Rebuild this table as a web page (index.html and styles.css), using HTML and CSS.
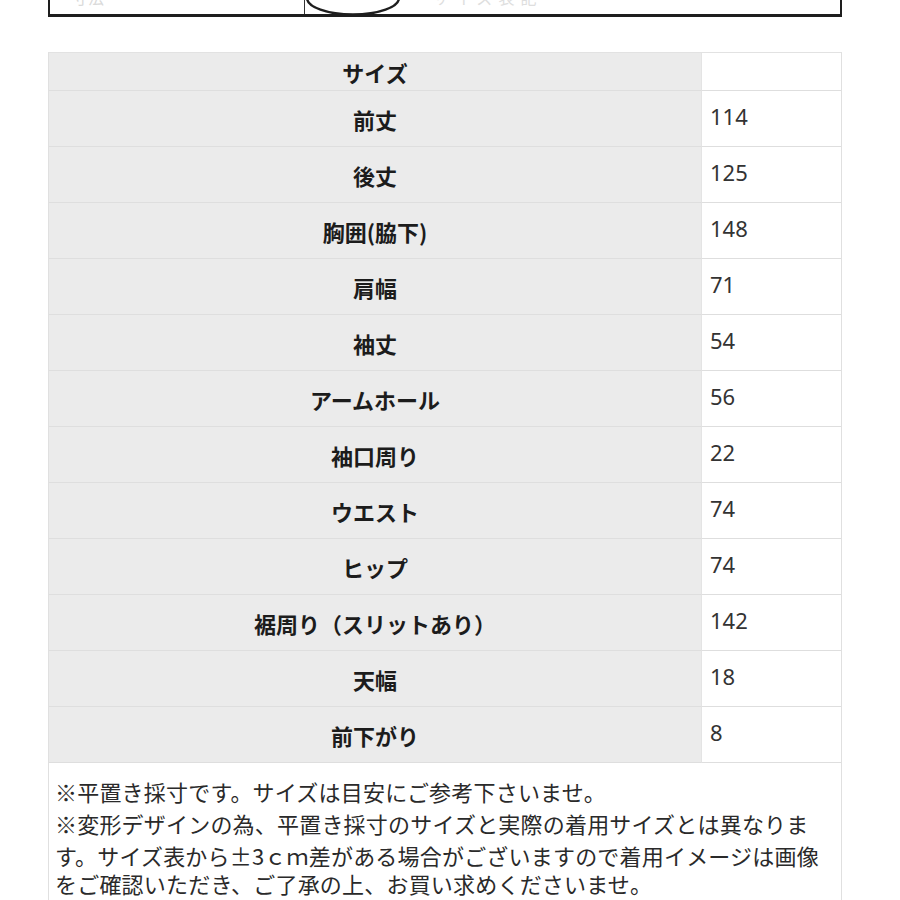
FILE: index.html
```html
<!DOCTYPE html>
<html lang="ja">
<head>
<meta charset="utf-8">
<title>サイズ表</title>
<link rel="stylesheet" href="styles.css">
</head>
<body>
<div class="page">
  <div class="topbox">
    <div class="top-left"><span class="faint">寸法</span></div>
    <div class="top-right">
      <svg class="ring" width="96" height="16" viewBox="0 0 96 16"><ellipse cx="48" cy="-2" rx="46" ry="16.5" fill="none" stroke="#1e1e1e" stroke-width="2.4"/></svg>
      <span class="faint faint-r">サイズ表記</span>
    </div>
  </div>

  <div class="sizes">
    <div class="lab first">サイズ</div><div class="val first"></div>
    <div class="lab">前丈</div><div class="val">114</div>
    <div class="lab">後丈</div><div class="val">125</div>
    <div class="lab">胸囲(脇下)</div><div class="val">148</div>
    <div class="lab">肩幅</div><div class="val">71</div>
    <div class="lab">袖丈</div><div class="val">54</div>
    <div class="lab">アームホール</div><div class="val">56</div>
    <div class="lab">袖口周り</div><div class="val">22</div>
    <div class="lab">ウエスト</div><div class="val">74</div>
    <div class="lab">ヒップ</div><div class="val">74</div>
    <div class="lab">裾周り（スリットあり）</div><div class="val">142</div>
    <div class="lab">天幅</div><div class="val">18</div>
    <div class="lab">前下がり</div><div class="val">8</div>
  </div>

  <div class="notes">
    <div class="line">※平置き採寸です。サイズは目安にご参考下さいませ。</div>
    <div class="line">※変形デザインの為、平置き採寸のサイズと実際の着用サイズとは異なりま</div>
    <div class="line">す。サイズ表から±3ｃｍ差がある場合がございますので着用イメージは画像</div>
    <div class="line last">をご確認いただき、ご了承の上、お買い求めくださいませ。</div>
  </div>
</div>
</body>
</html>
```

FILE: styles.css
```css
html, body {
  margin: 0;
  padding: 0;
  background: #ffffff;
}

body {
  font-family: "Noto Sans CJK JP", "Noto Sans", sans-serif;
  color: #222222;
  overflow: hidden;
}

.page {
  margin-left: 48px;
  width: 794px;
}

.topbox {
  box-sizing: border-box;
  height: 17px;
  border-left: 2px solid #1e1e1e;
  border-right: 2px solid #1e1e1e;
  border-bottom: 3px solid #1e1e1e;
  display: flex;
  overflow: hidden;
}

.top-left {
  width: 254px;
  border-right: 1px solid #333333;
  display: flex;
  align-items: flex-end;
  overflow: hidden;
}

.top-right {
  flex: 1;
  display: flex;
  align-items: flex-end;
  overflow: hidden;
}

.ring {
  display: block;
  flex: none;
  margin-bottom: -2px;
}

.faint {
  font-size: 16px;
  line-height: 16px;
  color: #dadada;
  margin-left: 22px;
  margin-bottom: 9px;
  white-space: nowrap;
}

.faint-r {
  margin-left: 32px;
  color: #dedede;
  letter-spacing: 6px;
}

.sizes {
  margin-top: 35px;
  box-sizing: border-box;
  width: 794px;
  display: grid;
  grid-template-columns: 1fr 139px;
  border-top: 1px solid #e2e2e2;
  border-left: 1px solid #e0e0e0;
  border-right: 1px solid #e0e0e0;
}

.lab,
.val {
  box-sizing: border-box;
  height: 56px;
  border-bottom: 1px solid #dedede;
  display: flex;
  align-items: center;
}

.lab.first,
.val.first {
  height: 38px;
}

.lab {
  background: #ebebeb;
  border-right: 1px solid #e4e4e4;
  justify-content: center;
  font-weight: 700;
  font-size: 22px;
  color: #1c1c1c;
}

.val {
  background: #ffffff;
  font-family: "Noto Sans", "Open Sans", sans-serif;
  font-size: 22px;
  color: #333333;
  padding-left: 8px;
  padding-bottom: 6px;
}

.notes {
  box-sizing: border-box;
  width: 794px;
  height: 160px;
  border-left: 1px solid #e0e0e0;
  border-right: 1px solid #e0e0e0;
  padding-top: 12px;
  padding-left: 6px;
  font-size: 22px;
  letter-spacing: 0.2px;
  color: #2a2a2a;
}

.line {
  line-height: 32px;
  white-space: nowrap;
}

.line.last {
  line-height: 24px;
}
```
